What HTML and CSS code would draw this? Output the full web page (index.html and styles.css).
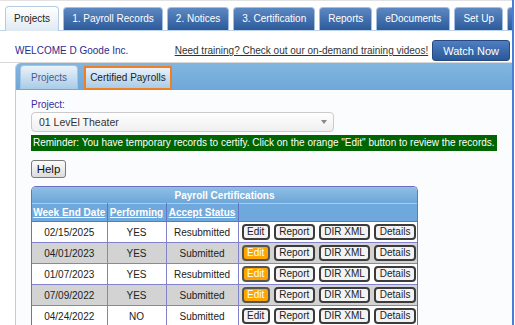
FILE: index.html
```html
<!DOCTYPE html>
<html lang="en">
<head>
    <meta charset="UTF-8">
    <title>Certified Payrolls</title>
    <link rel="stylesheet" href="styles.css">
</head>
<body>
<div class="page">
    <!-- Main navigation -->
    <div class="topnav">
        <div class="tab active">Projects</div>
        <div class="tab">1. Payroll Records</div>
        <div class="tab">2. Notices</div>
        <div class="tab">3. Certification</div>
        <div class="tab">Reports</div>
        <div class="tab">eDocuments</div>
        <div class="tab">Set Up</div>
        <div class="tab stub"></div>
    </div>

    <!-- Welcome line -->
    <div class="welcome-row">
        <span class="welcome">WELCOME D Goode Inc.</span>
        <a href="#" class="training">Need training? Check out our on-demand training videos!</a>
        <button class="watch">Watch Now</button>
    </div>

    <!-- Projects panel -->
    <div class="panel">
        <div class="panel-tabs">
            <div class="ptab">Projects</div>
            <div class="ptab current">Certified Payrolls</div>
        </div>
        <div class="panel-body">
            <div class="field-label">Project:</div>
            <div class="select">
                <span>01 LevEl Theater</span>
                <span class="arrow"></span>
            </div>
            <div class="reminder">Reminder: You have temporary records to certify. Click on the orange "Edit" button to review the records.</div>
            <button class="help">Help</button>

            <div class="grid">
                <table>
                    <colgroup>
                        <col class="c-date">
                        <col class="c-perf">
                        <col class="c-status">
                        <col>
                    </colgroup>
                    <tr class="title-row">
                        <th colspan="4">Payroll Certifications</th>
                    </tr>
                    <tr class="head-row">
                        <th><a href="#">Week End Date</a></th>
                        <th><a href="#">Performing</a></th>
                        <th><a href="#">Accept Status</a></th>
                        <th></th>
                    </tr>
                    <tr>
                        <td>02/15/2025</td>
                        <td>YES</td>
                        <td>Resubmitted</td>
                        <td class="actions"><span class="btn">Edit</span><span class="btn">Report</span><span class="btn">DIR XML</span><span class="btn">Details</span></td>
                    </tr>
                    <tr class="alt">
                        <td>04/01/2023</td>
                        <td>YES</td>
                        <td>Submitted</td>
                        <td class="actions"><span class="btn orange">Edit</span><span class="btn">Report</span><span class="btn">DIR XML</span><span class="btn">Details</span></td>
                    </tr>
                    <tr>
                        <td>01/07/2023</td>
                        <td>YES</td>
                        <td>Resubmitted</td>
                        <td class="actions"><span class="btn orange">Edit</span><span class="btn">Report</span><span class="btn">DIR XML</span><span class="btn">Details</span></td>
                    </tr>
                    <tr class="alt">
                        <td>07/09/2022</td>
                        <td>YES</td>
                        <td>Submitted</td>
                        <td class="actions"><span class="btn orange">Edit</span><span class="btn">Report</span><span class="btn">DIR XML</span><span class="btn">Details</span></td>
                    </tr>
                    <tr>
                        <td>04/24/2022</td>
                        <td>NO</td>
                        <td>Submitted</td>
                        <td class="actions"><span class="btn">Edit</span><span class="btn">Report</span><span class="btn">DIR XML</span><span class="btn">Details</span></td>
                    </tr>
                </table>
            </div>
        </div>
    </div>
</div>
</body>
</html>
```

FILE: styles.css
```css
body {
    margin: 0;
    font-family: "Liberation Sans", Arial, sans-serif;
    font-size: 10px;
    background-color: #fff;
}

.page {
    width: 512px;
    height: 325px;
    border-right: 2px solid #4a7dd4;
    overflow: hidden;
}

/* Top tabs */
.topnav {
    display: flex;
    align-items: flex-end;
    gap: 4px;
    height: 29px;
    padding-left: 5px;
    border-top: 1px solid #e2e2e2;
    border-bottom: 1px solid #bcd3ea;
    white-space: nowrap;
}

.tab {
    flex: none;
    height: 22px;
    line-height: 22px;
    padding: 0 8px;
    color: #fff;
    border: 1px solid #a3bedf;
    border-bottom: none;
    border-radius: 4px 4px 0 0;
    background: linear-gradient(#5c88c2, #2d5a9a);
}

.tab.stub {
    width: 20px;
}

.tab.active {
    height: 24px;
    line-height: 24px;
    margin-bottom: -1px;
    color: #222;
    border-color: #b3cce4;
    background: linear-gradient(#ffffff, #dfe9f3);
}

/* Welcome row */
.welcome-row {
    display: flex;
    align-items: center;
    gap: 4px;
    padding: 9px 2px 1px 15px;
    border-bottom: 1px solid #d8d8d8;
}

.welcome {
    color: #2b2b8c;
}

.training {
    margin-left: auto;
    color: #333;
}

.watch {
    height: 21px;
    padding: 0 10px;
    font-family: inherit;
    font-size: 11px;
    color: #fff;
    border: 1px solid #26497f;
    border-radius: 3px;
    background: linear-gradient(#4e7fc2, #2a5798);
}

/* Panel */
.panel {
    margin-left: 15px;
    border-left: 1px solid #b9cfe5;
    border-top-left-radius: 5px;
    background-color: #fbfcfd;
    height: 263px;
}

.panel-tabs {
    display: flex;
    align-items: flex-end;
    gap: 6px;
    height: 26px;
    padding-left: 4px;
    border-top-left-radius: 5px;
    border-bottom: 1px solid #6ea6d7;
    background: linear-gradient(#82b6df, #6fa8d9);
}

.ptab {
    height: 23px;
    line-height: 23px;
    padding: 0 10px;
    color: #4a5b8c;
    border: 1px solid #a5c4e2;
    border-bottom: none;
    border-radius: 4px 4px 0 0;
    background: linear-gradient(#eaf2f9, #a9cbe8);
}

.ptab.current {
    height: 20px;
    line-height: 20px;
    padding: 0 4px;
    color: #222;
    border: 2px solid #f07e22;
    border-radius: 0;
    background-color: #fff;
    margin-bottom: -1px;
}

.panel-body {
    padding: 8px 15px 0;
}

.field-label {
    color: #3b2ca0;
    line-height: 14px;
}

.select {
    display: flex;
    align-items: center;
    justify-content: space-between;
    width: 288px;
    height: 18px;
    padding: 0 6px 0 7px;
    font-size: 10.5px;
    color: #333;
    border: 1px solid #cacaca;
    border-radius: 4px;
    background: linear-gradient(#ffffff, #efefef);
}

.arrow {
    width: 0;
    height: 0;
    border-left: 3px solid transparent;
    border-right: 3px solid transparent;
    border-top: 4px solid #888;
}

.reminder {
    display: inline-block;
    margin-top: 3px;
    padding: 0 2px;
    height: 16px;
    line-height: 16px;
    color: #fff;
    background-color: #006400;
    white-space: nowrap;
}

.help {
    display: block;
    margin-top: 9px;
    height: 18px;
    width: 35px;
    padding: 0;
    font-family: inherit;
    font-size: 11.5px;
    color: #111;
    border: 1px solid #7a7a7a;
    border-radius: 3px;
    background: linear-gradient(#fbfbfb, #dcdcdc);
}

/* Certifications table */
.grid {
    width: 385px;
    margin-top: 8px;
    border: 1px solid #6d6dc2;
    border-bottom: none;
    border-radius: 5px 5px 0 0;
    overflow: hidden;
}

table {
    width: 100%;
    border-collapse: collapse;
    table-layout: fixed;
}

.c-date {
    width: 75px;
}

.c-perf {
    width: 59px;
}

.c-status {
    width: 72px;
}

.title-row th {
    height: 16px;
    padding: 0;
    color: #fff;
    font-size: 10px;
    background: linear-gradient(#8fc0e5, #6ca6d8);
}

.head-row th {
    height: 17px;
    padding: 0;
    font-size: 10px;
    white-space: nowrap;
    background-color: #6fa8dc;
    border: 1px solid #5f76c4;
    border-top-color: #a9cdea;
}

.head-row th:first-child {
    border-left: none;
}

.head-row th:last-child {
    border-right: none;
}

.head-row a {
    color: #fff;
}

td {
    height: 20px;
    padding: 0;
    text-align: center;
    color: #222;
    background-color: #fff;
    border: 1px solid #8383cc;
}

td:first-child {
    border-left: none;
}

td:last-child {
    border-right: none;
}

tr.alt td {
    background-color: #d3d3d3;
}

td.actions {
    text-align: left;
    padding-left: 3px;
    white-space: nowrap;
}

.btn {
    display: inline-block;
    height: 12px;
    line-height: 12px;
    padding: 0 3.5px;
    margin-right: 4px;
    vertical-align: middle;
    color: #222;
    border: 2px solid #3c3c3c;
    border-radius: 4px;
    background-color: #f3f3f3;
}

.btn.orange {
    color: #fff;
    background-color: #ffa500;
    border-color: #555;
}
```
